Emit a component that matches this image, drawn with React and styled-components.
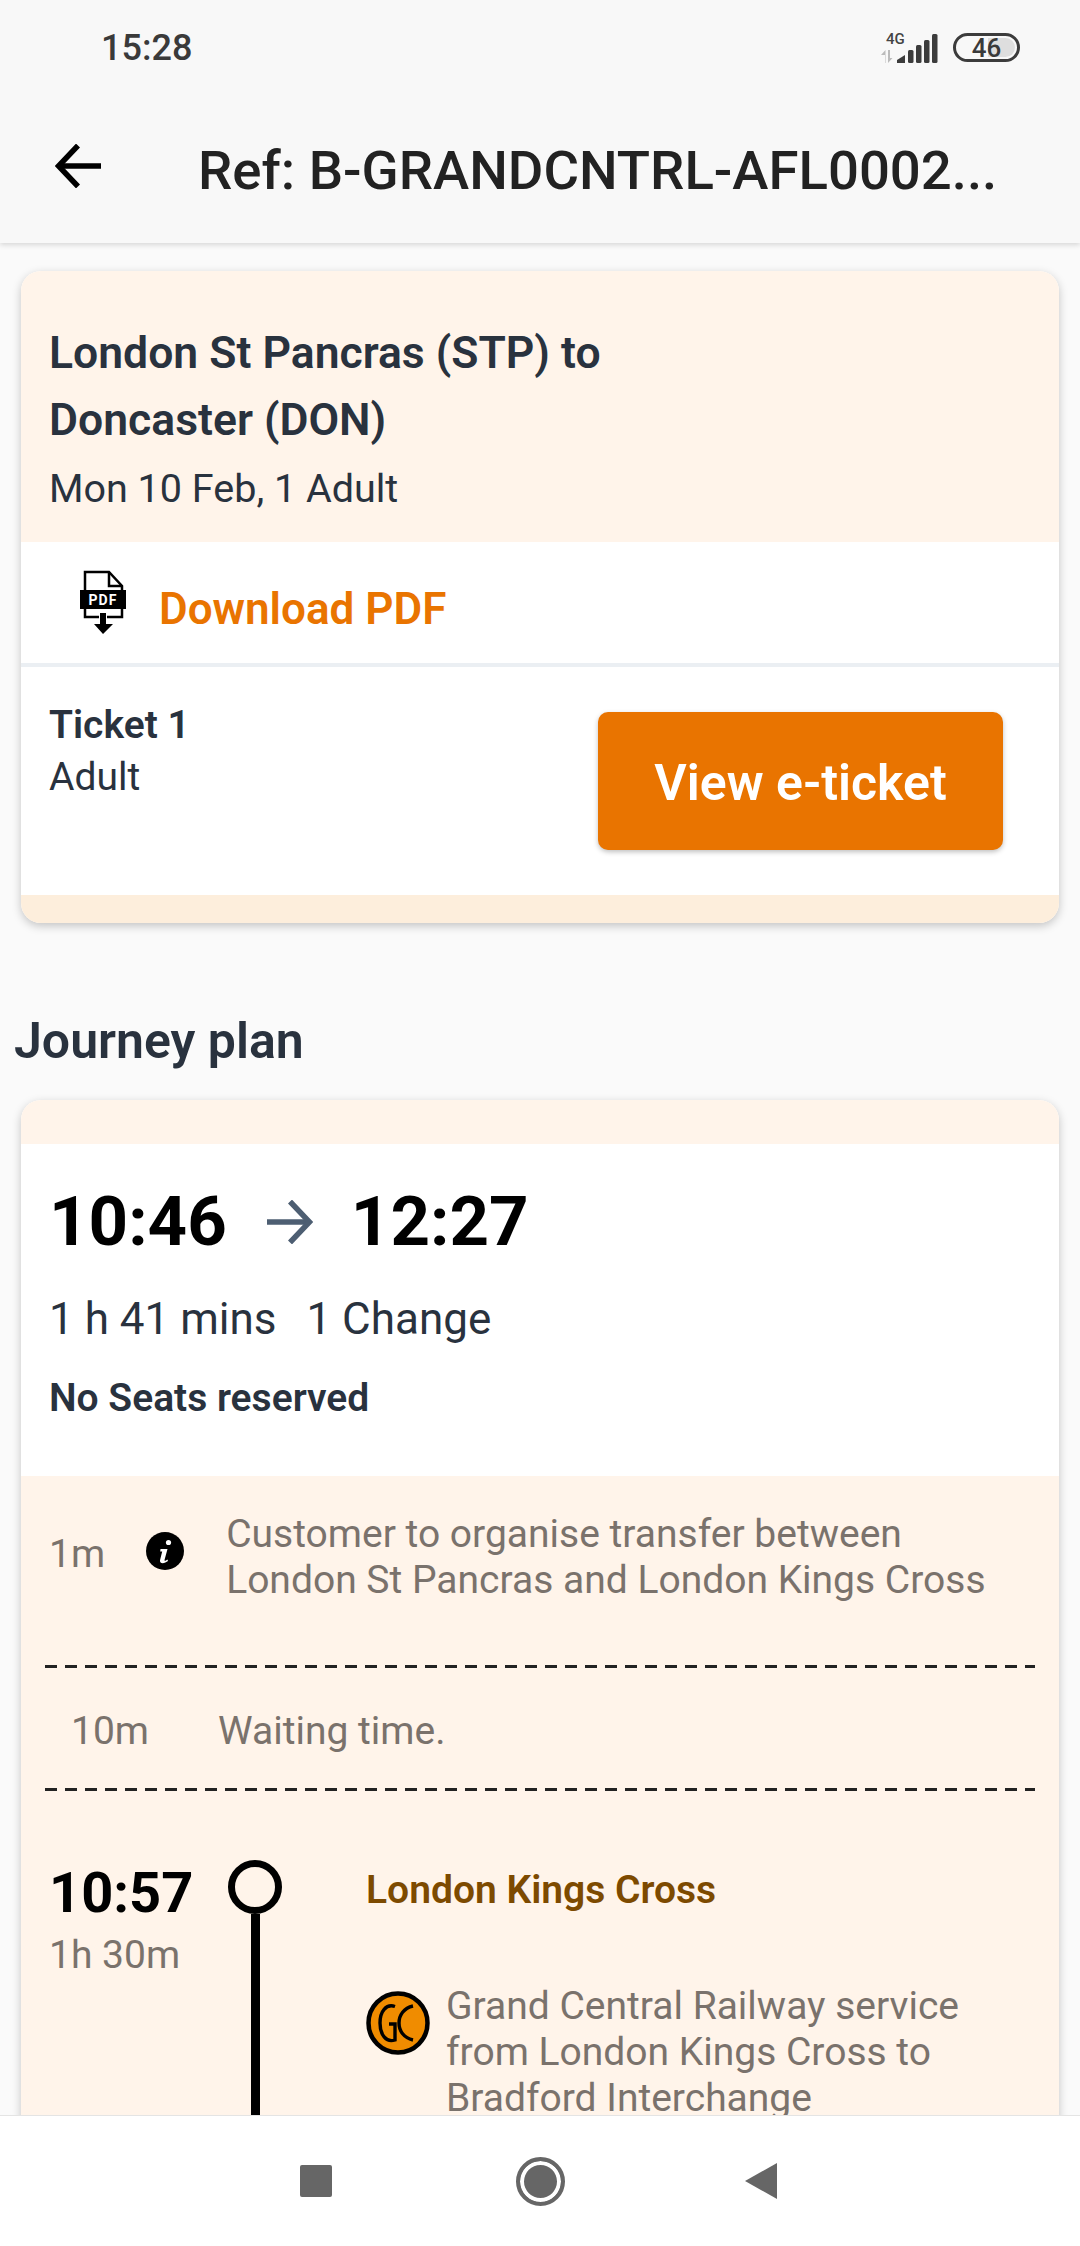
import styled, { createGlobalStyle } from "styled-components"

const Global = createGlobalStyle`
    html, body {
        margin: 0;
        padding: 0;
        background: #fafafa;
    }

    * {
        box-sizing: border-box;
    }
`

export default function App() {
    return (
        <Screen>
            <Global />
            <TopBar>
                <StatusBar>
                    <Clock>15:28</Clock>
                    <StatusIcons>
                        <Signal />
                        <Battery>
                            <BatteryLevel />
                            <span>46</span>
                        </Battery>
                    </StatusIcons>
                </StatusBar>
                <Header>
                    <BackIcon />
                    <HeaderTitle>Ref: B-GRANDCNTRL-AFL0002...</HeaderTitle>
                </Header>
            </TopBar>

            <Content>
                <TicketCard>
                    <RouteBox>
                        <RouteTitle>London St Pancras (STP) to<br />Doncaster (DON)</RouteTitle>
                        <RouteDate>Mon 10 Feb, 1 Adult</RouteDate>
                    </RouteBox>
                    <DownloadRow>
                        <PdfIcon />
                        <DownloadText>Download PDF</DownloadText>
                    </DownloadRow>
                    <TicketRow>
                        <div>
                            <TicketName>Ticket 1</TicketName>
                            <TicketType>Adult</TicketType>
                        </div>
                        <TicketButton>View e-ticket</TicketButton>
                    </TicketRow>
                    <CardFooter />
                </TicketCard>

                <SectionTitle>Journey plan</SectionTitle>

                <JourneyCard>
                    <JourneyTop />
                    <Summary>
                        <Times>
                            <BigTime>10:46</BigTime>
                            <TimeArrow />
                            <BigTime>12:27</BigTime>
                        </Times>
                        <Duration>
                            <span>1 h 41 mins</span>
                            <span>1 Change</span>
                        </Duration>
                        <Seats>No Seats reserved</Seats>
                    </Summary>

                    <Legs>
                        <TransferRow>
                            <TransferMinutes>1m</TransferMinutes>
                            <InfoIcon />
                            <LegText>Customer to organise transfer between<br />London St Pancras and London Kings Cross</LegText>
                        </TransferRow>
                        <DashedLine />
                        <WaitRow>
                            <LegMinutes>10m</LegMinutes>
                            <LegText>Waiting time.</LegText>
                        </WaitRow>
                        <DashedLine />
                        <StopRow>
                            <StopTimes>
                                <StopTime>10:57</StopTime>
                                <StopDuration>1h 30m</StopDuration>
                            </StopTimes>
                            <Track>
                                <TrackDot />
                                <TrackLine />
                            </Track>
                            <StopInfo>
                                <StopName>London Kings Cross</StopName>
                                <Service>
                                    <GcLogo />
                                    <LegText>Grand Central Railway service<br />from London Kings Cross to<br />Bradford Interchange</LegText>
                                </Service>
                            </StopInfo>
                        </StopRow>
                    </Legs>
                </JourneyCard>
            </Content>

            <NavBar>
                <NavSquare />
                <NavCircle />
                <NavTriangle />
            </NavBar>
        </Screen>
    )
}

function Signal() {
    return (
        <svg width="58" height="30" viewBox="0 0 58 30">
            <text x="6" y="11" fontFamily="Roboto, sans-serif" fontSize="15" fontWeight="500" fill="#444">4G</text>
            <g fill="#bbb">
                <path d="M5 30V22H1l4.500-5V30z" />
                <path d="M8 17v13l4.500-5H10V17z" />
            </g>
            <g fill="#3c3c3c">
                <path d="M17 30v-3l8-5v8z" />
                <rect x="28" y="17" width="5.500" height="13" rx="1.500" />
                <rect x="36" y="12" width="5.500" height="18" rx="1.500" />
                <rect x="44" y="7" width="5.500" height="23" rx="1.500" />
                <rect x="52" y="1" width="5.500" height="29" rx="1.500" />
            </g>
        </svg>
    )
}

function BackIcon() {
    return (
        <svg width="46" height="44" viewBox="0 0 46 44" fill="none" stroke="#000" strokeWidth="5.500">
            <path d="M46 22H4" />
            <path d="M23 1.500L3.500 22l19.500 20.500" />
        </svg>
    )
}

function PdfIcon() {
    return (
        <PdfSvg width="48" height="64" viewBox="0 0 48 64">
            <path d="M6 21V2h24l13 14v5M6 39v8h14M28 47h15v-8" fill="none" stroke="#000" strokeWidth="2.500" />
            <path d="M30 2v14h13" fill="none" stroke="#000" strokeWidth="2.500" />
            <rect x="1" y="20" width="46" height="19" fill="#000" />
            <text x="24" y="35" textAnchor="middle" fontFamily="Roboto, sans-serif" fontSize="14" fontWeight="700" letterSpacing="1" fill="#fff">PDF</text>
            <path d="M21 43h6v11h7L24 64 15 54h6z" fill="#000" />
        </PdfSvg>
    )
}

function TimeArrow() {
    return (
        <ArrowSvg width="46" height="44" viewBox="0 0 46 44" fill="none" stroke="#4d5e72" strokeWidth="5.500">
            <path d="M0 22h42" />
            <path d="M23 1.500L42.500 22 23 42.500" />
        </ArrowSvg>
    )
}

function InfoIcon() {
    return (
        <InfoSvg width="38" height="38" viewBox="0 0 38 38">
            <circle cx="19" cy="19" r="19" fill="#000" />
            <circle cx="22.500" cy="10.500" r="2.600" fill="#fff" />
            <path d="M14.500 17h7l-3 11c-.2 1 .6 1.200 3 -.5l.5 1.500c-3 2.500-8.500 3.500-8-.8l2.200-8.700h-2z" fill="#fff" />
        </InfoSvg>
    )
}

function GcLogo() {
    return (
        <GcSvg width="64" height="64" viewBox="0 0 64 64" fill="none">
            <circle cx="32" cy="32" r="29.500" fill="#f08c00" stroke="#000" strokeWidth="4.500" />
            <path d="M29 15.500c-9-3-15 5-15 16.500s6 20 15 17V33h-6" stroke="#000" strokeWidth="3.400" />
            <path d="M47 15c-9 2-14 9-14 17s5 15 14 17" stroke="#000" strokeWidth="3.400" />
        </GcSvg>
    )
}

const Screen = styled.div`
    width: 1080px;
    height: 2246px;

    display: flex;
    flex-direction: column;

    overflow: hidden;

    font-family: Roboto, sans-serif;

    background-color: #fafafa;
`

const TopBar = styled.div`
    flex: none;
    height: 243px;

    position: relative;
    z-index: 1;

    background-color: #f8f8f8;
    box-shadow: 0 2px 5px rgba(0, 0, 0, 0.14);
`

const StatusBar = styled.div`
    height: 95px;

    display: flex;
    justify-content: space-between;
    align-items: center;

    padding: 0 60px 0 101px;
`

const Clock = styled.span`
    font-weight: 500;
    font-size: 36px;

    color: #3a3a3a;
`

const StatusIcons = styled.div`
    display: flex;
    align-items: center;
    gap: 15px;
`

const Battery = styled.div`
    width: 67px;
    height: 29px;

    position: relative;

    display: flex;
    justify-content: center;
    align-items: center;

    font-weight: 500;
    font-size: 26px;

    color: #3a3a3a;

    border: 3.500px solid #3c3c3c;
    border-radius: 15px;

    span {
        position: relative;
    }
`

const BatteryLevel = styled.div`
    width: 27px;

    position: absolute;
    top: 2px;
    right: 2px;
    bottom: 2px;

    border-radius: 0 10px 10px 0;

    background-color: #dedede;
`

const Header = styled.div`
    height: 148px;

    display: flex;
    align-items: flex-start;

    padding: 49px 0 0 55px;
`

const HeaderTitle = styled.h1`
    margin: 1px 0 0 97px;

    font-weight: 500;
    font-size: 54.500px;
    line-height: 50px;

    color: #222222;
`

const Content = styled.div`
    flex: 1;
    min-height: 0;

    overflow: hidden;

    padding: 28px 21px 0;
`

const Card = styled.div`
    border-radius: 20px;

    overflow: hidden;

    background-color: #ffffff;
    box-shadow: 0 3px 10px rgba(0, 0, 0, 0.22);
`

const TicketCard = styled(Card)`
    height: 652px;
`

const RouteBox = styled.div`
    height: 271px;

    padding: 49px 28px 0;

    background-color: #fff4ea;
`

const RouteTitle = styled.h2`
    margin: 0;

    font-weight: 600;
    font-size: 44.500px;
    line-height: 67px;

    color: #29323e;
`

const RouteDate = styled.p`
    margin: 12px 0 0;

    font-size: 39.500px;
    line-height: 46px;

    color: #29323e;
`

const DownloadRow = styled.div`
    height: 125px;

    display: flex;
    align-items: flex-start;

    padding: 28px 0 0 58px;

    border-bottom: 4px solid #ebeff3;
`

const PdfSvg = styled.svg`
    flex: none;
`

const DownloadText = styled.span`
    margin: 14px 0 0 32px;

    font-weight: 600;
    font-size: 44px;
    line-height: 50px;

    color: #e97400;
`

const TicketRow = styled.div`
    height: 228px;

    display: flex;
    justify-content: space-between;
    align-items: flex-start;

    padding: 33px 56px 0 28px;
`

const TicketName = styled.div`
    font-weight: 600;
    font-size: 39px;
    line-height: 50px;

    color: #29323e;
`

const TicketType = styled.div`
    margin-top: 2px;

    font-size: 39px;
    line-height: 50px;

    color: #29323e;
`

const TicketButton = styled.button`
    width: 405px;
    height: 138px;

    margin-top: 12px;
    padding: 4px 0 0;

    font-family: inherit;
    font-weight: 600;
    font-size: 50px;

    color: #ffffff;

    border: none;
    border-radius: 10px;

    background-color: #e97400;
    box-shadow: 0 2px 5px rgba(0, 0, 0, 0.25);
`

const CardFooter = styled.div`
    height: 28px;

    background-color: #fdeedc;
`

const SectionTitle = styled.h2`
    margin: 90px 0 0 -7px;

    font-weight: 600;
    font-size: 50px;
    line-height: 56px;

    color: #29323e;
`

const JourneyCard = styled(Card)`
    margin-top: 31px;

    border-radius: 20px 20px 0 0;
`

const JourneyTop = styled.div`
    height: 44px;

    background-color: #fff4ea;
`

const Summary = styled.div`
    height: 332px;

    padding: 38px 28px 0;
`

const Times = styled.div`
    display: flex;
    align-items: center;
`

const BigTime = styled.span`
    font-weight: 700;
    font-size: 69px;
    line-height: 80px;

    color: #000000;
`

const ArrowSvg = styled.svg`
    margin: 0 38px 0 40px;
`

const Duration = styled.div`
    display: flex;
    gap: 30px;

    margin-top: 27px;

    font-size: 44px;
    line-height: 60px;

    color: #29323e;
`

const Seats = styled.div`
    margin-top: 26px;

    font-weight: 600;
    font-size: 39px;
    line-height: 46px;

    color: #29323e;
`

const Legs = styled.div`
    padding: 35px 0 0;

    background-color: #fff4ea;
`

const TransferRow = styled.div`
    height: 154px;

    display: flex;
    align-items: flex-start;

    padding: 0 28px;
`

const LegMinutes = styled.span`
    font-size: 39px;
    line-height: 46px;

    color: #7a726c;
`

const TransferMinutes = styled(LegMinutes)`
    margin-top: 20px;
`

const InfoSvg = styled.svg`
    flex: none;

    margin: 21px 42px 0 41px;
`

const LegText = styled.p`
    margin: 0;

    font-size: 39px;
    line-height: 46px;

    color: #7a726c;
`

const DashedLine = styled.div`
    height: 3px;

    margin: 0 24px;

    background-image: repeating-linear-gradient(to right, #222222 0 12px, transparent 12px 20px);
`

const WaitRow = styled.div`
    height: 120px;

    display: flex;
    align-items: center;
    gap: 69px;

    padding: 5px 0 0 50px;
`

const StopRow = styled.div`
    display: flex;

    padding: 69px 0 0 28px;
`

const StopTimes = styled.div`
    width: 179px;

    padding-top: 8px;
`

const StopTime = styled.div`
    font-weight: 700;
    font-size: 56px;
    line-height: 50px;

    color: #000000;
`

const StopDuration = styled.div`
    margin-top: 14px;

    font-size: 39px;
    line-height: 46px;

    color: #7a726c;
`

const Track = styled.div`
    width: 54px;

    display: flex;
    flex-direction: column;
    align-items: center;
`

const TrackDot = styled.div`
    flex: none;
    width: 54px;
    height: 54px;

    border: 7px solid #000000;
    border-radius: 50%;
`

const TrackLine = styled.div`
    flex: none;
    width: 9px;
    height: 300px;

    background-color: #000000;
`

const StopInfo = styled.div`
    margin-left: 84px;
`

const StopName = styled.div`
    margin-top: 5px;

    font-weight: 600;
    font-size: 39px;
    line-height: 50px;

    color: #7d4a00;
`

const Service = styled.div`
    display: flex;
    gap: 16px;

    margin-top: 68px;
`

const GcSvg = styled.svg`
    flex: none;

    margin-top: 8px;
`

const NavBar = styled.div`
    flex: none;
    height: 131px;

    position: relative;

    display: flex;
    align-items: center;

    padding: 0 0 0 300px;

    border-top: 1px solid #e4e4e4;

    background-color: #ffffff;
`

const NavSquare = styled.div`
    width: 32px;
    height: 32px;

    border-radius: 2px;

    background-color: #666666;
`

const NavCircle = styled.div`
    width: 49px;
    height: 49px;

    margin-left: 184px;

    border: 4px solid #666666;
    border-radius: 50%;

    background-color: #666666;
    box-shadow: inset 0 0 0 4px #ffffff;
`

const NavTriangle = styled.div`
    width: 32px;
    height: 36px;

    margin-left: 180px;

    background-color: #666666;
    clip-path: polygon(100% 0, 100% 100%, 0 50%);
`
